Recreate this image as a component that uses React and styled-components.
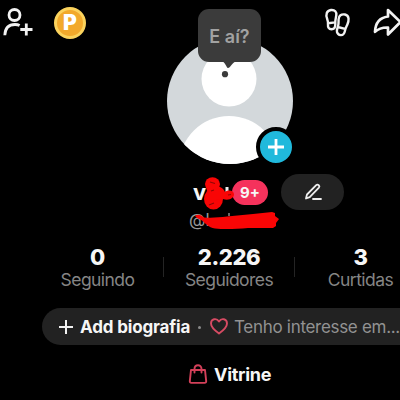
import React from 'react';
import styled, { createGlobalStyle } from 'styled-components';

const GlobalStyle = createGlobalStyle`
  * { box-sizing: border-box; }
  body { margin: 0; background: #000; overflow: hidden; }
  svg { display: block; flex: none; overflow: visible; }
`;

const Screen = styled.main`
  width: 400px;
  height: 400px;
  overflow: hidden;
  display: flex;
  flex-direction: column;
  background: #000;
  color: #f6f6f6;
  font-family: Inter, 'Liberation Sans', sans-serif;
  white-space: nowrap;
`;

const Header = styled.header`
  height: 38px;
  flex: none;
  display: flex;
  justify-content: space-between;
  padding: 6px 0 0 2px;
`;

const HeaderGroup = styled.div`
  display: flex;
  gap: ${(p) => p.$gap}px;
  margin-right: ${(p) => p.$bleed || 0}px;
`;

const AvatarArea = styled.section`
  position: relative;
  width: 126px;
  height: 126px;
  flex: none;
  margin-left: 167px;
`;

const Bubble = styled.div`
  position: absolute;
  left: 31px;
  top: -29px;
  width: 63px;
  height: 53px;
  border-radius: 11px;
  background: #3b3b3b;
  color: #a2a2a2;
  font-size: 18px;
  font-weight: 600;
  line-height: 55px;
  text-align: center;
`;

const BubbleTail = styled.svg`
  position: absolute;
  left: 21px;
  top: 52px;
`;

const AddBadge = styled.button`
  position: absolute;
  left: 89px;
  top: 89px;
  width: 40px;
  height: 40px;
  padding: 0;
  display: grid;
  place-items: center;
  border: 4px solid #000;
  border-radius: 50%;
  background: #20b9dc;
`;

const NameRow = styled.div`
  display: flex;
  align-items: center;
  height: 36px;
  flex: none;
  margin-top: 10px;
  padding-left: 193px;
`;

const Name = styled.div`
  position: relative;
  width: 39px;
  font-size: 22px;
  font-weight: 700;
  line-height: 36px;
`;

const Scribble = styled.svg`
  position: absolute;
  left: ${(p) => p.$x}px;
  top: ${(p) => p.$y}px;
`;

const CountBadge = styled.span`
  width: 36px;
  height: 25px;
  border-radius: 13px;
  background: #f5325c;
  font-size: 15px;
  font-weight: 700;
  line-height: 25px;
  text-align: center;
`;

const EditButton = styled.button`
  width: 63px;
  height: 36px;
  margin-left: 13px;
  padding: 0;
  display: grid;
  place-items: center;
  border: 0;
  border-radius: 18px;
  background: #222;
`;

const Handle = styled.div`
  position: relative;
  height: 22px;
  flex: none;
  margin-left: 189px;
  color: #999;
  font-size: 17px;
  line-height: 21px;
`;

const Stats = styled.section`
  display: grid;
  grid-template-columns: 131px 1px 130px 1px 131px;
  align-items: center;
  height: 50px;
  flex: none;
  margin: 10px 0 3px 32px;
`;

const Stat = styled.div`
  display: flex;
  flex-direction: column;
  align-items: center;
`;

const StatValue = styled.strong`
  font-size: 22px;
  font-weight: 800;
  line-height: 24px;
  letter-spacing: -0.4px;
`;

const StatLabel = styled.span`
  color: #858585;
  font-size: 17.5px;
  line-height: 21px;
  letter-spacing: -0.55px;
`;

const Divider = styled.i`
  width: 1px;
  height: 20px;
  background: #242424;
`;

const BioPill = styled.section`
  display: flex;
  align-items: center;
  width: 376px;
  height: 37px;
  flex: none;
  margin: 13px 0 0 42px;
  padding-left: 17px;
  border-radius: 19px;
  background: #222;
`;

const BioAction = styled.strong`
  width: 110px;
  margin-left: 7px;
  font-size: 17px;
  font-weight: 700;
  letter-spacing: -0.15px;
`;

const Dot = styled.i`
  width: 3px;
  height: 3px;
  margin: 1px 9px 0 8px;
  border-radius: 50%;
  background: #8b8b8b;
`;

const Interest = styled.span`
  margin-left: 6px;
  color: #929292;
  font-size: 17px;
  letter-spacing: -0.3px;
`;

const Showcase = styled.section`
  display: flex;
  align-items: center;
  height: 24px;
  flex: none;
  margin: 17px 0 0 188px;
  gap: 6px;
  font-size: 18px;
  font-weight: 700;
  letter-spacing: -0.3px;
`;

const line = { fill: 'none', strokeLinecap: 'round', strokeLinejoin: 'round' };

function AddPersonIcon() {
  return (
    <svg width="32" height="32" viewBox="0 0 32 32" {...line} stroke="#f2f2f2" strokeWidth="2.8" strokeLinecap="butt">
      <circle cx="12.5" cy="9" r="5.5" />
      <path d="M2.8 29.3c.3-7 4-10.8 10.2-10.8 1.9 0 3.4.3 4.6 1M18.3 23.5h12.2M24.3 17.5v12" />
    </svg>
  );
}

const CoinMark = styled.span`
  width: 32px;
  height: 32px;
  margin-top: 1px;
  display: grid;
  place-items: center;
  border: 3px solid #fbd35d;
  border-radius: 50%;
  background: #f2a92b;
  color: #fff;
  font-size: 21px;
  font-weight: 900;
  line-height: 26px;
`;

function FootprintsIcon() {
  return (
    <svg width="26" height="30" viewBox="0 0 26 30" {...line} stroke="#f2f2f2" strokeWidth="2.4">
      <path d="M6 4c4-.4 5.700 2 5.300 5.200-.3 2.400-.9 4-1 6.400v3c0 2.800-1.200 4.700-3.800 4.700-2.800 0-3.700-2.100-3.500-4.600.1-2.400-.2-4.100-.9-6C.6 8.500 1.500 4.500 6 4ZM3 17.300l7.200-.9" />
      <path d="M20 8.500c-3.800-.8-6.200 1.400-6.400 4.700-.2 2.500.3 4.600-.6 7.100-.8 2.300-1.500 3.900-1 5.700.4 1.800 1.700 2.900 3.700 3.100 2.500.2 3.800-1.800 4.300-4.500.4-2.300 1.400-3.900 2.300-5.900 1.600-3.400 2.500-9.200-2.300-10.200ZM12.900 21l7.100 1.800" />
    </svg>
  );
}

function ShareIcon() {
  return (
    <svg width="29" height="32" viewBox="0 0 29 32" {...line} stroke="#f2f2f2" strokeWidth="2.7">
      <path d="M15 4l12.500 12L15 28.500v-7c-5.500-.2-9.500 1-13 4.300.4-8.700 4.200-14.200 13-15.300Z" />
    </svg>
  );
}

function App() {
  return (
    <>
      <GlobalStyle />
      <Screen>
        <Header>
          <HeaderGroup $gap={20}>
            <AddPersonIcon />
            <CoinMark>P</CoinMark>
          </HeaderGroup>
          <HeaderGroup $gap={22} $bleed={-2}>
            <FootprintsIcon />
            <ShareIcon />
          </HeaderGroup>
        </Header>

        <AvatarArea>
          <svg width="126" height="126" viewBox="0 0 126 126">
            <defs>
              <clipPath id="avatar"><circle cx="63" cy="63" r="63" /></clipPath>
            </defs>
            <g clipPath="url(#avatar)">
              <path fill="#d3d8db" d="M0 0h126v126H0z" />
              <circle cx="62" cy="41" r="27.5" fill="#fff" />
              <circle cx="62" cy="128" r="50" fill="#fff" />
            </g>
          </svg>
          <Bubble>
            E aí?
            <BubbleTail width="20" height="18" viewBox="0 0 20 18">
              <path d="M2 0h16c-4 .3-6.500 7-9 7C7.200 7 7 1 2 0Z" fill="#3b3b3b" />
              <circle cx="6" cy="13.200" r="3.100" fill="#3b3b3b" />
            </BubbleTail>
          </Bubble>
          <AddBadge aria-label="Adicionar">
            <svg width="18" height="18" viewBox="0 0 18 18" stroke="#fff" strokeWidth="2.800">
              <path d="M1 9h16M9 1v16" />
            </svg>
          </AddBadge>
        </AvatarArea>

        <NameRow>
          <Name>
            v
            <Scribble $x={9} $y={1} width="32" height="36" viewBox="0 0 32 36">
              <path d="M23.500 12h3v9h-3z" fill="#eee" />
              <g fill="#f90505">
                <ellipse cx="10.500" cy="9" rx="7.500" ry="6.800" />
                <ellipse cx="11.500" cy="24" rx="9.500" ry="10.500" />
                <path d="M4 12h14c3 1 4 3 5 5 4-3 9-1 9 2.500S27 26 21 24L8 26Z" />
              </g>
              <path d="M8 7l5 1.500M26 20l3-.5M7 30l5-2M9 16l3-1" stroke="#8d0707" strokeWidth="1.200" />
            </Scribble>
          </Name>
          <CountBadge>9+</CountBadge>
          <EditButton aria-label="Editar">
            <svg width="18" height="18" viewBox="0 0 18 18" {...line} stroke="#eee" strokeWidth="1.800">
              <path d="M2 15.500l1-4L12.200 2.200c1.600-1.500 4.200.8 2.700 2.500L5.700 14.200ZM9 16h8" />
            </svg>
          </EditButton>
        </NameRow>
        <Handle>
          @l
          <Scribble $x={4} $y={1} width="88" height="20" viewBox="0 0 88 20">
            <path d="M2 5c3-2.500 6-1 9 1.500 8 .5 15 0 23-1L60 3l19-2 3 1v3l4 3-3 4v3l-3 2H55c-12 1-23 1.500-33 .5-7-1-9-5-13-8L4 7Z" fill="#f90505" />
            <path d="M36 2v3" stroke="#888" strokeWidth="1.500" />
          </Scribble>
        </Handle>

        <Stats>
          <Stat><StatValue>0</StatValue><StatLabel>Seguindo</StatLabel></Stat>
          <Divider />
          <Stat><StatValue>2.226</StatValue><StatLabel>Seguidores</StatLabel></Stat>
          <Divider />
          <Stat><StatValue>3</StatValue><StatLabel>Curtidas</StatLabel></Stat>
        </Stats>

        <BioPill>
          <svg width="14" height="14" viewBox="0 0 14 14" stroke="#f2f2f2" strokeWidth="2">
            <path d="M0 7h14M7 0v14" />
          </svg>
          <BioAction>Add biografia</BioAction>
          <Dot />
          <svg width="18" height="17" viewBox="0 0 18 17" {...line} stroke="#d64b63" strokeWidth="1.900">
            <path d="M9 15.500C5.500 13 1 9.600 1 5.500 1 .8 6.500-.5 9 3.500 11.500-.5 17 .8 17 5.500c0 4.100-4.500 7.500-8 10Z" />
          </svg>
          <Interest>Tenho interesse em...</Interest>
        </BioPill>

        <Showcase>
          <svg width="20" height="20" viewBox="0 0 20 20" {...line} stroke="#d34059" strokeWidth="1.900">
            <path d="M3 6h14l1.200 11.200c.1 1-.5 1.700-1.500 1.700H3.300c-1 0-1.600-.7-1.500-1.700ZM6.500 8.500V5c0-5 7-5 7 0v3.500" />
          </svg>
          Vitrine
        </Showcase>
      </Screen>
    </>
  );
}

export default App;
